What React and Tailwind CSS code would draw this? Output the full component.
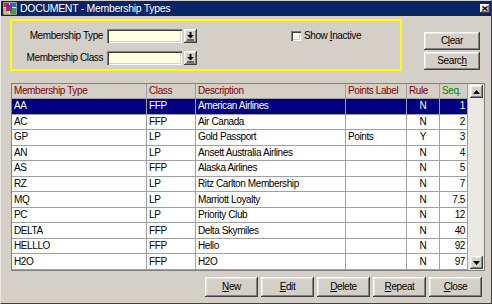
import React from "react";

const rows = [
  ["AA", "FFP", "American Airlines", "", "N", "1"],
  ["AC", "FFP", "Air Canada", "", "N", "2"],
  ["GP", "LP", "Gold Passport", "Points", "Y", "3"],
  ["AN", "LP", "Ansett Australia Airlines", "", "N", "4"],
  ["AS", "FFP", "Alaska Airlines", "", "N", "5"],
  ["RZ", "LP", "Ritz Carlton Membership", "", "N", "7"],
  ["MQ", "LP", "Marriott Loyalty", "", "N", "7.5"],
  ["PC", "LP", "Priority Club", "", "N", "12"],
  ["DELTA", "FFP", "Delta Skymiles", "", "N", "40"],
  ["HELLLO", "FFP", "Hello", "", "N", "92"],
  ["H2O", "FFP", "H2O", "", "N", "97"],
];

const raised =
  "bg-[#d4d0c8] shadow-[inset_-1px_-1px_0_#404040,inset_1px_1px_0_#ffffff,inset_-2px_-2px_0_#808080,inset_2px_2px_0_#e8e6e0]";
const sunken =
  "shadow-[inset_1px_1px_0_#808080,inset_2px_2px_0_#404040,inset_-1px_-1px_0_#ffffff,inset_-2px_-2px_0_#d4d0c8]";

function Btn({ children, w }) {
  return (
    <div className={`${raised} ${w} flex items-center justify-center text-black`}>
      {children}
    </div>
  );
}

function DropBtn() {
  return (
    <div className={`${raised} w-[13px] h-[14px] flex items-center justify-center`}>
      <svg width="9" height="9" viewBox="0 0 9 9">
        <rect x="3.5" y="0" width="2" height="3" fill="#000" />
        <polygon points="1,3 8,3 4.5,6.5" fill="#000" />
        <rect x="1" y="7.5" width="7" height="1" fill="#000" />
      </svg>
    </div>
  );
}

function Field({ label }) {
  return (
    <div className="flex items-center">
      <div className="w-[95px] text-right pr-[4px] text-black">{label}</div>
      <div className={`w-[75px] h-[14px] bg-[#ffffe1] ${sunken}`} />
      <div className="ml-[2px]">
        <DropBtn />
      </div>
    </div>
  );
}

const cols = [
  { w: "w-[135px]", head: "Membership Type", align: "text-left" },
  { w: "w-[49px]", head: "Class", align: "text-left" },
  { w: "w-[150px]", head: "Description", align: "text-left" },
  { w: "w-[61px]", head: "Points Label", align: "text-left" },
  { w: "w-[33px]", head: "Rule", align: "text-center" },
  { w: "w-[28px]", head: "Seq.", align: "text-right" },
];

export default function App() {
  return (
    <div className="w-[492px] h-[304px] bg-[#d4d0c8] border-t border-l border-t-[#d4d0c8] border-l-[#e8e6e0] border-r border-b border-r-[#404040] border-b-[#404040] flex flex-col font-['Liberation_Sans',Arial,sans-serif] text-[10px] tracking-[-0.4px] leading-none text-black overflow-hidden">
      {/* Title bar */}
      <div className="h-[15px] bg-[#0a246a] flex items-center pl-[2px] pr-[1px]">
        <svg width="14" height="13" viewBox="0 0 14 13" className="shrink-0">
          <rect x="0" y="0" width="14" height="13" fill="#f4f4f4" />
          <rect x="1" y="1" width="5" height="4" fill="#d81e1e" />
          <rect x="7" y="1" width="6" height="4" fill="#2a6ad8" />
          <rect x="1" y="6" width="5" height="6" fill="#e8c020" />
          <rect x="7" y="6" width="6" height="6" fill="#3aa040" />
          <rect x="3" y="3" width="6" height="6" fill="#8a2a9a" />
          <rect x="0" y="0" width="14" height="13" fill="none" stroke="#404040" strokeWidth="1" />
        </svg>
        <div className="ml-[3px] text-white text-[10.5px] tracking-[-0.3px]">DOCUMENT - Membership Types</div>
        <div className={`${raised} ml-auto w-[10px] h-[9px] flex items-center justify-center`}>
          <svg width="6" height="5" viewBox="0 0 6 5">
            <path d="M0.5 0.5 L5.5 4.5 M5.5 0.5 L0.5 4.5" stroke="#000" strokeWidth="1.2" />
          </svg>
        </div>
      </div>

      {/* Top section */}
      <div className="flex mt-[3px]">
        <div className="ml-[9px] w-[392px] h-[52px] border-2 border-[#ffff00] flex flex-col pt-[8px] gap-[8px]">
          <div className="flex items-center">
            <Field label="Membership Type" />
            <div className="ml-[94px] flex items-center">
              <div className={`w-[10px] h-[10px] bg-white ${sunken}`} />
              <div className="ml-[3px]">
                Show <span className="underline">I</span>nactive
              </div>
            </div>
          </div>
          <Field label="Membership Class" />
        </div>
        <div className="ml-[22px] mt-[13px] flex flex-col gap-[2px]">
          <Btn w="w-[56px] h-[18px]">
            <span>
              C<span className="underline">l</span>ear
            </span>
          </Btn>
          <Btn w="w-[56px] h-[18px]">
            <span>
              Searc<span className="underline">h</span>
            </span>
          </Btn>
        </div>
      </div>

      {/* Table */}
      <div className="ml-[10px] mt-[12px] w-[474px] h-[188px] border border-[#808080] flex bg-white">
        <div className="w-[456px] flex flex-col">
          <div className="h-[15px] flex bg-[#d4d0c8] border-b border-[#a0a0a0]">
            {cols.map((c, i) => (
              <div
                key={i}
                className={`${c.w} border-r border-[#a0a0a0] px-[2px] flex items-center ${
                  i === 5 ? "text-[#008000]" : "text-[#800000]"
                }`}
              >
                {c.head}
              </div>
            ))}
          </div>
          {rows.map((r, ri) => (
            <div
              key={ri}
              className={`flex-1 flex border-b border-[#a0a0a0] ${
                ri === 0 ? "bg-[#000080] text-white" : "bg-white text-black"
              }`}
            >
              {r.map((v, ci) => (
                <div
                  key={ci}
                  className={`${cols[ci].w} border-r border-[#a0a0a0] px-[2px] flex items-center ${
                    ci === 4 ? "justify-center" : ci === 5 ? "justify-end" : "justify-start"
                  }`}
                >
                  {v}
                </div>
              ))}
            </div>
          ))}
        </div>
        <div className="flex-1 bg-[#ebe9e4] flex flex-col justify-between items-center py-[1px]">
          <div className={`${raised} w-[13px] h-[13px] flex items-center justify-center`}>
            <svg width="7" height="4" viewBox="0 0 7 4">
              <polygon points="0,4 7,4 3.5,0" fill="#000" />
            </svg>
          </div>
          <div className={`${raised} w-[13px] h-[13px] flex items-center justify-center`}>
            <svg width="7" height="4" viewBox="0 0 7 4">
              <polygon points="0,0 7,0 3.5,4" fill="#000" />
            </svg>
          </div>
        </div>
      </div>

      {/* Bottom buttons */}
      <div className="flex justify-end gap-[3px] mt-[6px] mr-[9px]">
        <Btn w="w-[53px] h-[20px]">
          <span>
            <span className="underline">N</span>ew
          </span>
        </Btn>
        <Btn w="w-[53px] h-[20px]">
          <span>
            <span className="underline">E</span>dit
          </span>
        </Btn>
        <Btn w="w-[53px] h-[20px]">
          <span>
            <span className="underline">D</span>elete
          </span>
        </Btn>
        <Btn w="w-[53px] h-[20px]">
          <span>
            <span className="underline">R</span>epeat
          </span>
        </Btn>
        <Btn w="w-[53px] h-[20px]">
          <span>
            <span className="underline">C</span>lose
          </span>
        </Btn>
      </div>
    </div>
  );
}
